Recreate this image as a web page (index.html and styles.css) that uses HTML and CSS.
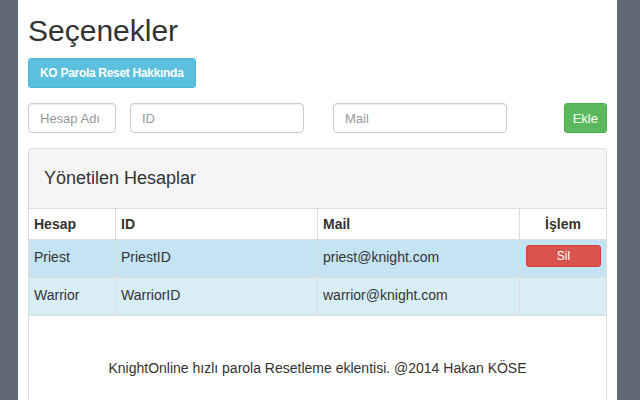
FILE: index.html
```html
<!DOCTYPE html>
<html lang="tr">
  <head>
    <meta charset="UTF-8" />
    <title>Seçenekler</title>
    <link rel="stylesheet" href="styles.css">
  </head>
  <body>
    <div class="container">
      <h1>Seçenekler</h1>
      <button type="button" class="btn btn-info">KO Parola Reset Hakkında</button>

      <form class="add-form">
        <input type="text" class="field f-name" placeholder="Hesap Adı" />
        <input type="text" class="field f-id" placeholder="ID" />
        <input type="text" class="field f-mail" placeholder="Mail" />
        <button type="button" class="btn btn-success">Ekle</button>
      </form>

      <div class="panel">
        <div class="panel-heading">Yönetilen Hesaplar</div>
        <table class="accounts">
          <thead>
            <tr>
              <th class="c-name">Hesap</th>
              <th class="c-id">ID</th>
              <th class="c-mail">Mail</th>
              <th class="c-act">İşlem</th>
            </tr>
          </thead>
          <tbody>
            <tr class="active-row">
              <td>Priest</td>
              <td>PriestID</td>
              <td>priest@knight.com</td>
              <td class="act"><button type="button" class="btn btn-danger">Sil</button></td>
            </tr>
            <tr class="info-row">
              <td>Warrior</td>
              <td>WarriorID</td>
              <td>warrior@knight.com</td>
              <td class="act"></td>
            </tr>
          </tbody>
        </table>
        <div class="footer">KnightOnline hızlı parola Resetleme eklentisi. @2014 Hakan KÖSE</div>
      </div>
    </div>
  </body>
</html>
```

FILE: styles.css
```css
html,
body {
  margin: 0;
  padding: 0;
  background-color: #5f6a74;
  height: 100%;
}
body {
  font-family: "Liberation Sans", Arial, sans-serif;
  font-size: 14px;
  color: #333;
  overflow: hidden;
}
.container {
  box-sizing: border-box;
  margin-left: 18px;
  width: 599px;
  height: 100%;
  padding: 13px 10px 0 10px;
  background: #fff;
}
h1 {
  margin: 0 0 10px 0;
  font-size: 30px;
  font-weight: normal;
  line-height: 35px;
  color: #333;
}
.btn {
  font-family: "Liberation Sans", Arial, sans-serif;
  border: 1px solid transparent;
  border-radius: 3px;
  color: #fff;
  cursor: pointer;
  font-size: 12px;
  padding: 0 11px;
}
.btn-info {
  height: 30px;
  background-color: #5bc0de;
  border-color: #46b8da;
  font-weight: bold;
  letter-spacing: -0.3px;
  display: block;
}
.btn-success {
  height: 30px;
  margin-left: auto;
  padding: 0 8px;
  background-color: #5cb85c;
  border-color: #4cae4c;
  font-size: 13px;
}
.btn-danger {
  display: block;
  width: 100%;
  height: 22px;
  background-color: #d9534f;
  border-color: #d43f3a;
  font-size: 12px;
}
.add-form {
  display: flex;
  align-items: center;
  margin: 15px 0 15px 0;
}
.field {
  box-sizing: border-box;
  height: 30px;
  padding: 0 11px;
  border: 1px solid #ccc;
  border-radius: 4px;
  font-family: "Liberation Sans", Arial, sans-serif;
  font-size: 13px;
  color: #555;
  box-shadow: inset 0 1px 1px rgba(0, 0, 0, 0.075);
}
.field::placeholder {
  color: #999;
}
.f-name {
  width: 88px;
}
.f-id {
  width: 174px;
  margin-left: 14px;
}
.f-mail {
  width: 174px;
  margin-left: 29px;
}
.panel {
  border: 1px solid #ddd;
  border-bottom: none;
  border-radius: 4px 4px 0 0;
  min-height: 252px;
}
.panel-heading {
  background-color: #f5f5f5;
  border-bottom: 1px solid #ddd;
  border-radius: 3px 3px 0 0;
  padding: 19px 15px 20px 15px;
  font-size: 18px;
  line-height: 20px;
}
.accounts {
  width: 100%;
  border-collapse: collapse;
}
.accounts th,
.accounts td {
  text-align: left;
  border-left: 1px solid #ddd;
  border-bottom: 1px solid #ddd;
  line-height: 20px;
}
.accounts th:first-child,
.accounts td:first-child {
  border-left: none;
}
.accounts th {
  padding: 5px;
  font-weight: bold;
}
.accounts td {
  padding: 7px 5px 10px 5px;
}
.c-name {
  width: 76px;
}
.c-id {
  width: 191px;
}
.c-mail {
  width: 191px;
}
.accounts th.c-act {
  text-align: center;
}
.accounts td.act {
  padding: 5px 5px 9px 6px;
  vertical-align: top;
}
.active-row {
  background-color: #c4e3f3;
}
.info-row {
  background-color: #d9edf7;
}
.footer {
  text-align: center;
  padding: 42px 0 0 0;
  line-height: 20px;
}
```
